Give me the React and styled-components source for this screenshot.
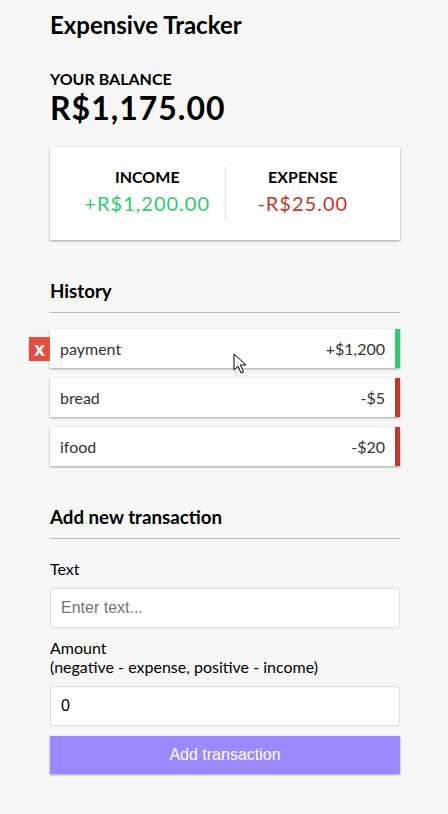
import React, { useState } from 'react';
import styled, { createGlobalStyle } from 'styled-components';

const shadow = '0 1px 3px rgba(0, 0, 0, 0.12), 0 1px 2px rgba(0, 0, 0, 0.24)';

const GlobalStyle = createGlobalStyle`
  * { box-sizing: border-box; }
  body {
    margin: 0;
    background-color: #f7f7f7;
    font-family: Lato, 'Noto Sans', sans-serif;
  }
`;

const Page = styled.div`
  display: flex;
  justify-content: center;
  padding-left: 2px;
`;

const Container = styled.div`
  width: 350px;
  position: relative;
`;

const Title = styled.h2`
  font-size: 24px;
  margin: 10px 0 30px;
`;

const Label4 = styled.h4`
  margin: 0;
  font-size: 16px;
  text-transform: uppercase;
`;

const Balance = styled.h1`
  font-size: 32px;
  letter-spacing: 1px;
  margin: 0;
`;

const IncExp = styled.div`
  background-color: #fff;
  box-shadow: ${shadow};
  padding: 20px;
  display: flex;
  justify-content: space-between;
  margin: 20px 0;

  & > div {
    flex: 1;
    text-align: center;
  }
  & > div:first-of-type {
    border-right: 1px solid #dedede;
  }
`;

const Money = styled.p`
  font-size: 20px;
  letter-spacing: 1px;
  margin: 5px 0;
  color: ${(p) => (p.$plus ? '#2ecc71' : '#c0392b')};
`;

const SectionTitle = styled.h3`
  font-size: 18.72px;
  border-bottom: 1px solid #bbb;
  padding-bottom: 10px;
  margin: 40px 0 10px;
`;

const List = styled.ul`
  list-style-type: none;
  padding: 0;
  margin: 16px 0 40px;
`;

const Item = styled.li`
  background-color: #fff;
  box-shadow: ${shadow};
  color: #333;
  display: flex;
  justify-content: space-between;
  position: relative;
  padding: 10px;
  margin: 10px 0;
  font-size: 16px;
  border-right: 5px solid ${(p) => (p.$plus ? '#2ecc71' : '#c0392b')};
`;

const DeleteBtn = styled.button`
  background-color: #e74c3c;
  border: 0;
  color: #fff;
  font-family: 'Liberation Sans', Arial, sans-serif;
  font-weight: bold;
  font-size: 20px;
  line-height: 20px;
  padding: 2px 5px;
  position: absolute;
  top: 50%;
  left: 0;
  transform: translate(-100%, -50%);
  opacity: ${(p) => (p.$show ? 1 : 0)};
`;

const Cursor = styled.svg`
  position: absolute;
  left: 183px;
  top: 24px;
`;

const FormControl = styled.div``;

const FieldLabel = styled.label`
  display: inline-block;
  margin: 10px 0;
  font-size: 16px;
`;

const Input = styled.input`
  border: 1px solid #dedede;
  border-radius: 2px;
  display: block;
  font-family: 'Liberation Sans', Arial, sans-serif;
  font-size: 16px;
  padding: 10px;
  width: 100%;
  background: #fff;
  color: #000;

  &::placeholder {
    color: #757575;
  }
`;

const Button = styled.button`
  background-color: #9c88ff;
  box-shadow: ${shadow};
  color: #fff;
  border: 0;
  display: block;
  font-family: 'Liberation Sans', Arial, sans-serif;
  font-size: 16px;
  margin: 10px 0 30px;
  padding: 10px;
  width: 100%;
`;

const transactions = [
  { id: 1, text: 'payment', amount: '+$1,200', plus: true },
  { id: 2, text: 'bread', amount: '-$5', plus: false },
  { id: 3, text: 'ifood', amount: '-$20', plus: false },
];

const App = () => {
  const [text, setText] = useState('');
  const [amount, setAmount] = useState(0);

  return (
    <Page>
      <GlobalStyle />
      <Container>
        <Title>Expensive Tracker</Title>
        <Label4>Your Balance</Label4>
        <Balance>R$1,175.00</Balance>

        <IncExp>
          <div>
            <Label4>Income</Label4>
            <Money $plus>+R$1,200.00</Money>
          </div>
          <div>
            <Label4>Expense</Label4>
            <Money>-R$25.00</Money>
          </div>
        </IncExp>

        <SectionTitle>History</SectionTitle>
        <List>
          {transactions.map((t, i) => (
            <Item key={t.id} $plus={t.plus}>
              {t.text} <span>{t.amount}</span>
              <DeleteBtn $show={i === 0}>x</DeleteBtn>
              {i === 0 && (
                <Cursor width="14" height="22" viewBox="0 0 14 22">
                  <path d="M1 1 L1 17 L5 13 L8 20 L10.5 19 L7.5 12 L13 12 Z" fill="#fff" stroke="#000" strokeWidth="1" strokeLinejoin="round" />
                </Cursor>
              )}
            </Item>
          ))}
        </List>

        <SectionTitle>Add new transaction</SectionTitle>
        <form onSubmit={(e) => e.preventDefault()}>
          <FormControl>
            <FieldLabel htmlFor="text">Text</FieldLabel>
            <Input type="text" id="text" value={text} onChange={(e) => setText(e.target.value)} placeholder="Enter text..." />
          </FormControl>
          <FormControl>
            <FieldLabel htmlFor="amount">
              Amount <br />
              (negative - expense, positive - income)
            </FieldLabel>
            <Input type="number" id="amount" value={amount} onChange={(e) => setAmount(e.target.value)} placeholder="Enter amount..." />
          </FormControl>
          <Button>Add transaction</Button>
        </form>
      </Container>
    </Page>
  );
};

export default App;
